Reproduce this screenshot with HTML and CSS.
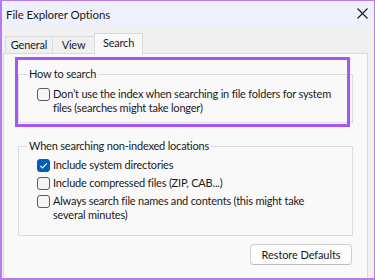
FILE: index.html
```html
<!DOCTYPE html>
<html lang="en">
<head>
    <meta charset="UTF-8">
    <meta name="viewport" content="width=device-width, initial-scale=1.0">
    <title>File Explorer Options</title>

    <link rel="stylesheet" href="styles.css">
</head>

<body>

<div class="window">
    <div class="titlebar">
        <span class="title">File Explorer Options</span>
        <svg class="close" width="11" height="11" viewBox="0 0 11 11">
            <path d="M0.5 0.5 L10.5 10.5 M10.5 0.5 L0.5 10.5" stroke="#1a1a1a" stroke-width="1.1" fill="none"/>
        </svg>
    </div>

    <div class="tabs">
        <div class="tab tab-general">General</div>
        <div class="tab tab-view">View</div>
        <div class="tab tab-search active">Search</div>
    </div>

    <div class="panel">
        <fieldset class="group group-how">
            <legend>How to search</legend>
            <label class="option">
                <span class="box"></span>
                <span class="text">Don’t use the index when searching in file folders for system<br>files (searches might take longer)</span>
            </label>
        </fieldset>

        <fieldset class="group group-locations">
            <legend>When searching non-indexed locations</legend>
            <label class="option">
                <span class="box checked">
                    <svg width="13" height="13" viewBox="0 0 13 13">
                        <path d="M3.3 6.8 L5.5 9 L9.8 4.3" stroke="#fff" stroke-width="1.2" fill="none"/>
                    </svg>
                </span>
                <span class="text">Include system directories</span>
            </label>
            <label class="option">
                <span class="box"></span>
                <span class="text">Include compressed files (ZIP, CAB...)</span>
            </label>
            <label class="option">
                <span class="box"></span>
                <span class="text">Always search file names and contents (this might take<br>several minutes)</span>
            </label>
        </fieldset>

        <div class="actions">
            <button type="button">Restore Defaults</button>
        </div>
    </div>

    <!-- annotation frame drawn over the first group -->
    <div class="highlight"></div>
</div>

</body>
</html>
```

FILE: styles.css
```css
/* whole dialog with the purple screenshot frame */
body {
    margin: 0;
}

.window {
    position: relative;
    width: 375px;
    height: 280px;
    box-sizing: border-box;
    border: 1px solid #b57cf2;
    border-left-width: 2px;
    border-bottom-width: 2px;
    background-color: #f0f0f0;
    font-family: Lato, "Noto Sans", sans-serif;
    font-size: 11px;
    letter-spacing: -0.2px;
    color: #1a1a1a;
    overflow: hidden;
}

/* title bar */
.titlebar {
    height: 26px;
    display: flex;
    align-items: center;
    justify-content: space-between;
    padding: 0 6px 0 4px;
    background-color: #eef1fb;
}

.title {
    font-size: 11.5px;
    letter-spacing: -0.1px;
    color: #1a1a1a;
}

.close {
    margin-top: -1px;
}

/* tab strip */
.tabs {
    display: flex;
    align-items: flex-end;
    height: 26px;
    padding-left: 3px;
}

.tab {
    box-sizing: border-box;
    height: 17px;
    line-height: 16px;
    border: 1px solid #dadada;
    border-bottom: none;
    background-color: #f0f0f0;
    text-align: center;
}

.tab-general {
    width: 48px;
}

.tab-view {
    width: 43px;
    margin-left: -1px;
}

.tab-search {
    width: 49px;
    margin-left: -1px;
}

.tab.active {
    position: relative;
    height: 21px;
    line-height: 18px;
    margin-bottom: -1px;
    background-color: #f9f9f9;
    z-index: 1;
}

/* tab page */
.panel {
    height: 240px;
    margin: 0 6px 0 1px;
    padding: 12px 14px 0 14px;
    border: 1px solid #dadada;
    background-color: #f9f9f9;
}

.group {
    margin: 0;
    padding: 5px 4px 7px 18px;
    border: 1px solid #dcdcdc;
}

.group legend {
    padding: 0 2px;
    margin-left: -10px;
    line-height: 16px;
}

.group-locations {
    margin-top: 15px;
    padding-top: 4px;
    padding-bottom: 13px;
    display: flex;
    flex-direction: column;
    gap: 4px;
}

.option {
    display: flex;
    align-items: flex-start;
    gap: 3px;
    line-height: 14px;
    white-space: nowrap;
}

.box {
    flex: none;
    box-sizing: border-box;
    width: 13px;
    height: 13px;
    margin-top: 0.5px;
    border: 1px solid #5a5a5a;
    border-radius: 3px;
    background-color: #f5f5f5;
}

.box.checked {
    border-color: #005fb8;
    background-color: #005fb8;
}

.box.checked svg {
    display: block;
    margin: -1px 0 0 -1px;
}

.actions {
    display: flex;
    justify-content: flex-end;
    margin-top: 8px;
    padding-right: 1px;
}

.actions button {
    width: 102px;
    height: 21px;
    padding: 0;
    font-family: inherit;
    font-size: 11px;
    letter-spacing: -0.1px;
    color: #1a1a1a;
    background-color: #fdfdfd;
    border: 1px solid #d0d0d0;
    border-bottom-color: #bcbcbc;
    border-radius: 4px;
}

/* purple annotation rectangle */
.highlight {
    position: absolute;
    left: 13px;
    top: 56px;
    width: 335px;
    height: 70px;
    box-sizing: border-box;
    border: 3px solid #a855f7;
}
```
